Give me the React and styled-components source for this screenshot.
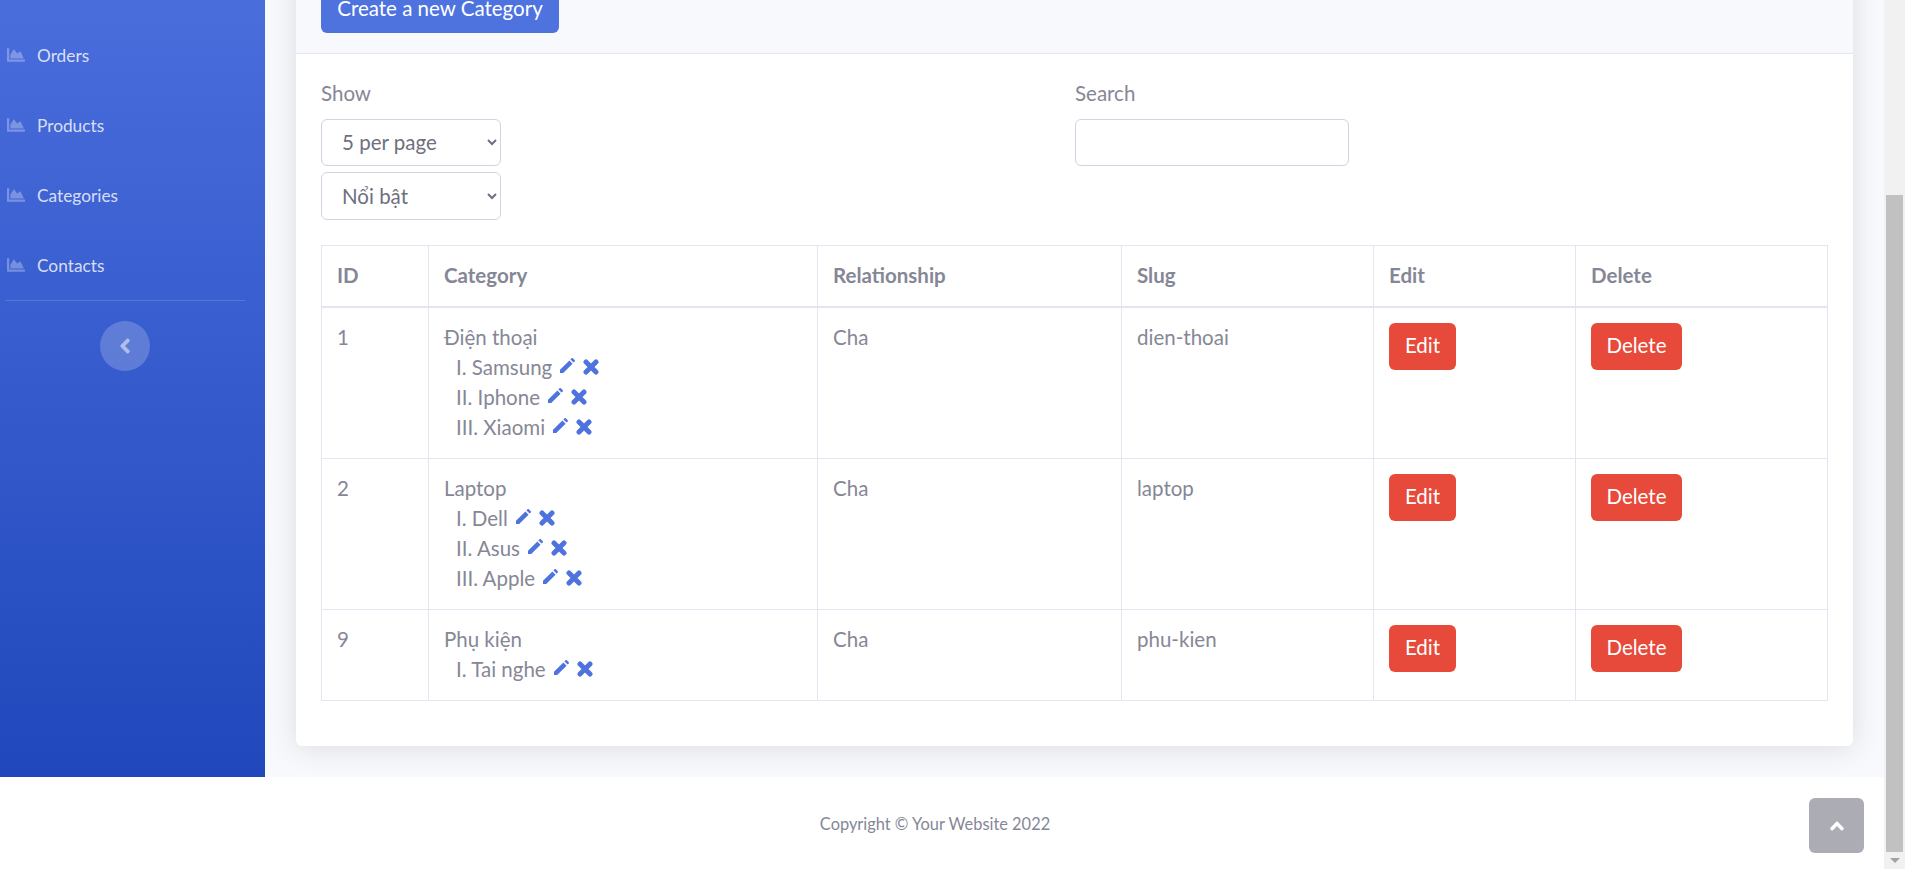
import React from 'react'
import styled, { createGlobalStyle } from 'styled-components'
import { FaChartArea, FaAngleLeft, FaAngleUp } from 'react-icons/fa'

const GlobalStyle = createGlobalStyle`
  html, body {
    margin: 0;
    height: 100%;
    overflow: hidden;
    background: #fff;
  }
  body {
    font-family: 'Lato', 'Noto Sans', sans-serif;
    font-size: 20.5px;
    color: #858796;
  }
  * {
    box-sizing: border-box;
  }
`

const Page = styled.div`
  position: relative;
  display: flex;
  height: 869px;
  overflow: hidden;
`

const Main = styled.div`
  flex: 1;
  min-width: 0;
  display: flex;
  flex-direction: column;
`

const Top = styled.div`
  display: flex;
  height: 777px;
`

const Sidebar = styled.nav`
  flex: 0 0 265px;
  padding: 20px 20px 0 5px;
  background: linear-gradient(180deg, #4a6ddc 0%, #2048bc 100%);
`

const NavItem = styled.a`
  display: flex;
  align-items: center;
  height: 70px;
  padding-left: 2px;
  font-size: 17.3px;
  color: rgba(255, 255, 255, 0.8);
  svg {
    width: 18px;
    height: 18px;
    margin-right: 12px;
    color: rgba(255, 255, 255, 0.3);
  }
`

const Divider = styled.hr`
  margin: 0 0 20px;
  border: 0;
  border-top: 1px solid rgba(255, 255, 255, 0.15);
`

const Toggler = styled.button`
  display: flex;
  align-items: center;
  justify-content: center;
  width: 50px;
  height: 50px;
  margin: 0 auto;
  padding: 0;
  border: 0;
  border-radius: 50%;
  background: rgba(255, 255, 255, 0.2);
  color: rgba(255, 255, 255, 0.5);
  font-size: 24px;
`

const Content = styled.main`
  flex: 1;
  min-width: 0;
  display: flex;
  flex-direction: column;
  justify-content: flex-end;
  padding: 0 31px 31px;
  background: #f8f9fc;
  overflow: hidden;
`

const Card = styled.section`
  background: #fff;
  border-radius: 6px;
  box-shadow: 0 2px 28px 0 rgba(58, 59, 69, 0.15);
`

const CardHeader = styled.header`
  padding: 20px 25px;
  background: #f8f9fc;
  border-bottom: 1px solid #e3e6f0;
`

const PrimaryButton = styled.button`
  display: block;
  width: 238px;
  height: 47px;
  padding: 0 0 2px;
  border: 0;
  border-radius: 6px;
  background: #4e73df;
  color: #fff;
  font: inherit;
`

const CardBody = styled.div`
  padding: 26px 25px 45px;
`

const Filters = styled.div`
  display: grid;
  grid-template-columns: 754px 1fr;
  margin-bottom: 25px;
`

const FilterLabel = styled.label`
  display: block;
  height: 39px;
  line-height: 26px;
`

const Select = styled.select`
  display: block;
  width: 180px;
  height: 47px;
  padding: 0 12px 0 16px;
  border: 1px solid #d1d3e2;
  border-radius: 6px;
  background-color: #fff;
  color: #6e707e;
  font: inherit;
  & + & {
    height: 48px;
    margin-top: 6px;
  }
`

const SearchInput = styled.input`
  display: block;
  width: 274px;
  height: 47px;
  border: 1px solid #d1d3e2;
  border-radius: 6px;
  background: #fff;
`

const Table = styled.table`
  width: 1506px;
  table-layout: fixed;
  border-collapse: collapse;
`

const Col = styled.col`
  width: ${p => p.$w}px;
`

const Th = styled.th`
  height: 62px;
  padding: 0 15px 2px;
  border: 1px solid #e3e6f0;
  border-bottom-width: 2px;
  text-align: left;
  font-weight: 700;
`

const Td = styled.td`
  padding: 14px 15px 16px;
  border: 1px solid #e3e6f0;
  vertical-align: top;
  line-height: 30px;
`

const ActionCell = styled(Td)`
  padding: 15px 15px 16px;
`

const Children = styled.ul`
  margin: 0;
  padding: 0 0 0 12px;
  list-style: none;
`

const Child = styled.li`
  display: flex;
  align-items: center;
  gap: 8px;
  height: 30px;
`

const PenGlyph = styled.svg`
  flex: none;
  width: 15px;
  height: 15px;
  margin-top: -3px;
  fill: #4e73df;
`

const CrossGlyph = styled.svg`
  flex: none;
  width: 16px;
  height: 16px;
  stroke: #4e73df;
  stroke-width: 5;
  stroke-linecap: round;
  fill: none;
`

const PenIcon = () => (
  <PenGlyph viewBox="0 0 16 16">
    <path d="M0 16v-3.4L10 2.6 13.4 6 3.4 16zM11.1 1.5 12.3.3a1 1 0 0 1 1.4 0l2 2a1 1 0 0 1 0 1.4l-1.2 1.2z" />
  </PenGlyph>
)

const CrossIcon = () => (
  <CrossGlyph viewBox="0 0 16 16">
    <path d="M3 3l10 10M13 3L3 13" />
  </CrossGlyph>
)

const DangerButton = styled.button`
  display: block;
  height: 47px;
  padding: 0 0 4px;
  width: ${p => p.$w}px;
  border: 0;
  border-radius: 6px;
  background: #e74a3b;
  color: #fff;
  font: inherit;
`

const Footer = styled.footer`
  flex: 1;
  display: flex;
  align-items: center;
  justify-content: center;
  padding: 0 14px 0 0;
  background: #fff;
  font-size: 16.4px;
`

const ScrollTop = styled.a`
  position: absolute;
  right: 41px;
  bottom: 16px;
  display: flex;
  align-items: center;
  justify-content: center;
  width: 55px;
  height: 55px;
  border-radius: 6px;
  background: rgba(90, 92, 105, 0.5);
  color: #fff;
  font-size: 22px;
`

const Scrollbar = styled.div`
  flex: 0 0 21px;
  display: flex;
  flex-direction: column;
  justify-content: flex-end;
  padding: 0 2px;
  background: #f1f1f1;
`

const ScrollThumb = styled.div`
  height: 657px;
  background: #c1c1c1;
`

const ScrollArrow = styled.div`
  display: flex;
  align-items: center;
  justify-content: center;
  height: 17px;
  &::after {
    content: '';
    border-style: solid;
    border-width: 5px 5px 0;
    border-color: #a3a3a3 transparent transparent;
  }
`

const navItems = ['Orders', 'Products', 'Categories', 'Contacts']

const categories = [
  { id: 1, name: 'Điện thoại', slug: 'dien-thoai', children: ['I. Samsung', 'II. Iphone', 'III. Xiaomi'] },
  { id: 2, name: 'Laptop', slug: 'laptop', children: ['I. Dell', 'II. Asus', 'III. Apple'] },
  { id: 9, name: 'Phụ kiện', slug: 'phu-kien', children: ['I. Tai nghe'] },
]

const columns = [
  ['ID', 107],
  ['Category', 389],
  ['Relationship', 304],
  ['Slug', 252],
  ['Edit', 202],
  ['Delete', 252],
]

export default function App() {
  return (
    <Page>
      <GlobalStyle />
      <Main>
        <Top>
          <Sidebar>
            {navItems.map(item => (
              <NavItem key={item}>
                <FaChartArea />
                {item}
              </NavItem>
            ))}
            <Divider />
            <Toggler>
              <FaAngleLeft />
            </Toggler>
          </Sidebar>
          <Content>
            <Card>
              <CardHeader>
                <PrimaryButton>Create a new Category</PrimaryButton>
              </CardHeader>
              <CardBody>
                <Filters>
                  <div>
                    <FilterLabel>Show</FilterLabel>
                    <Select defaultValue="5">
                      <option value="5">5 per page</option>
                    </Select>
                    <Select defaultValue="hot">
                      <option value="hot">Nổi bật</option>
                    </Select>
                  </div>
                  <div>
                    <FilterLabel>Search</FilterLabel>
                    <SearchInput />
                  </div>
                </Filters>
                <Table>
                  <colgroup>
                    {columns.map(([name, w]) => (
                      <Col key={name} $w={w} />
                    ))}
                  </colgroup>
                  <thead>
                    <tr>
                      {columns.map(([name]) => (
                        <Th key={name}>{name}</Th>
                      ))}
                    </tr>
                  </thead>
                  <tbody>
                    {categories.map(cat => (
                      <tr key={cat.id}>
                        <Td>{cat.id}</Td>
                        <Td>
                          {cat.name}
                          <Children>
                            {cat.children.map(child => (
                              <Child key={child}>
                                {child}
                                <PenIcon />
                                <CrossIcon />
                              </Child>
                            ))}
                          </Children>
                        </Td>
                        <Td>Cha</Td>
                        <Td>{cat.slug}</Td>
                        <ActionCell>
                          <DangerButton $w={67}>Edit</DangerButton>
                        </ActionCell>
                        <ActionCell>
                          <DangerButton $w={91}>Delete</DangerButton>
                        </ActionCell>
                      </tr>
                    ))}
                  </tbody>
                </Table>
              </CardBody>
            </Card>
          </Content>
        </Top>
        <Footer>Copyright © Your Website 2022</Footer>
      </Main>
      <Scrollbar>
        <ScrollThumb />
        <ScrollArrow />
      </Scrollbar>
      <ScrollTop>
        <FaAngleUp />
      </ScrollTop>
    </Page>
  )
}
